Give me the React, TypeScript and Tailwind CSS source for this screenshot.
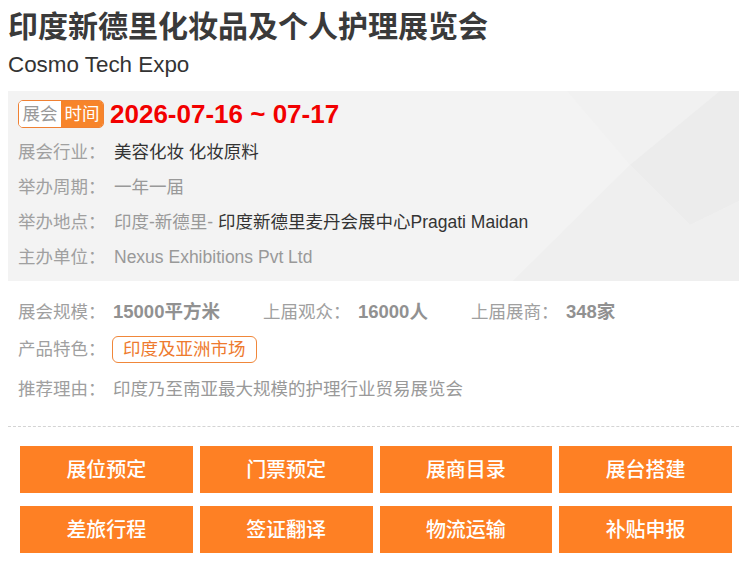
import React from "react";

const font = { fontFamily: '"Liberation Sans", "Noto Sans CJK SC", sans-serif' };

const infoRows: { label: string; value: React.ReactNode }[] = [
  { label: "展会行业：", value: <span className="text-[#333]">美容化妆 化妆原料</span> },
  { label: "举办周期：", value: <span className="text-[#999]">一年一届</span> },
  {
    label: "举办地点：",
    value: (
      <>
        <span className="text-[#999]">印度-新德里-</span>
        <span className="text-[#333]"> 印度新德里麦丹会展中心Pragati Maidan</span>
      </>
    ),
  },
  { label: "主办单位：", value: <span className="text-[#999]">Nexus Exhibitions Pvt Ltd</span> },
];

const stats = [
  { label: "展会规模：", value: "15000平方米" },
  { label: "上届观众：", value: "16000人" },
  { label: "上届展商：", value: "348家" },
];

const actions = ["展位预定", "门票预定", "展商目录", "展台搭建", "差旅行程", "签证翻译", "物流运输", "补贴申报"];

export default function App() {
  return (
    <div className="w-[755px] h-[567px] bg-white px-[8px] pt-[7px] overflow-hidden" style={font}>
      <div className="w-[731px]">
        <h1 className="text-[30px] leading-[40px] font-bold text-[#3a3a3a]">印度新德里化妆品及个人护理展览会</h1>
        <div className="mt-[3px] text-[22.4px] leading-[30px] text-[#333]">Cosmo Tech Expo</div>

        {/* grey info panel */}
        <div className="relative mt-[11px] h-[190px] bg-[#f1f1f1] overflow-hidden pl-[10px] pt-[9px]">
          <svg className="absolute inset-0 pointer-events-none" width="731" height="190" viewBox="0 0 731 190">
            <polygon points="0,0 559,0 622,74 505,190 0,190" fill="#f3f3f3" />
            <polygon points="622,74 712,0 731,0 731,110 682,134" fill="#ececec" />
            <polygon points="505,190 622,74 682,134 731,110 731,190" fill="#efefef" />
          </svg>
          <div className="relative flex items-center h-[28px]">
            <div className="flex h-[28px] border border-[#f08133] rounded-[5px] overflow-hidden text-[17.5px] leading-[26px]">
              <span className="w-[42px] text-center bg-white text-[#999]">展会</span>
              <span className="w-[42px] text-center bg-[#f7842a] text-white">时间</span>
            </div>
            <span className="ml-[6px] text-[26px] font-bold text-[#f20000] leading-[28px]">2026-07-16 ~ 07-17</span>
          </div>
          <div className="relative mt-[7px]">
            {infoRows.map((r) => (
              <div key={r.label} className="flex items-center h-[35px] text-[17.5px]">
                <span className="w-[96px] shrink-0 text-[#a0a0a0]">{r.label}</span>
                <span>{r.value}</span>
              </div>
            ))}
          </div>
        </div>

        {/* stats */}
        <div className="pl-[10px] mt-[13px] text-[17.5px]">
          <div className="flex items-center h-[36px]">
            {stats.map((s) => (
              <div key={s.label} className="flex items-center mr-[43px]">
                <span className="w-[95px] shrink-0 text-[#a0a0a0]">{s.label}</span>
                <span className="text-[18.5px] font-bold text-[#919191]">{s.value}</span>
              </div>
            ))}
          </div>
          <div className="flex items-center h-[38px]">
            <span className="w-[94px] shrink-0 text-[#a0a0a0]">产品特色：</span>
            <span className="h-[27px] px-[10px] leading-[25px] border border-[#f0873a] rounded-[6px] text-[#ee7a2e]">
              印度及亚洲市场
            </span>
          </div>
          <div className="flex items-center h-[42px]">
            <span className="w-[95px] shrink-0 text-[#a0a0a0]">推荐理由：</span>
            <span className="text-[#999]">印度乃至南亚最大规模的护理行业贸易展览会</span>
          </div>
        </div>

        <div className="mt-[16px] border-t border-dashed border-[#d4d4d4]" />

        <div className="mt-[19px] pl-[12px] pr-[7px] grid grid-cols-4 gap-x-[7px] gap-y-[13px]">
          {actions.map((a) => (
            <button
              key={a}
              className="h-[47px] bg-[#fe8024] text-white text-[20px] font-medium flex items-center justify-center"
            >
              {a}
            </button>
          ))}
        </div>
      </div>
    </div>
  );
}
